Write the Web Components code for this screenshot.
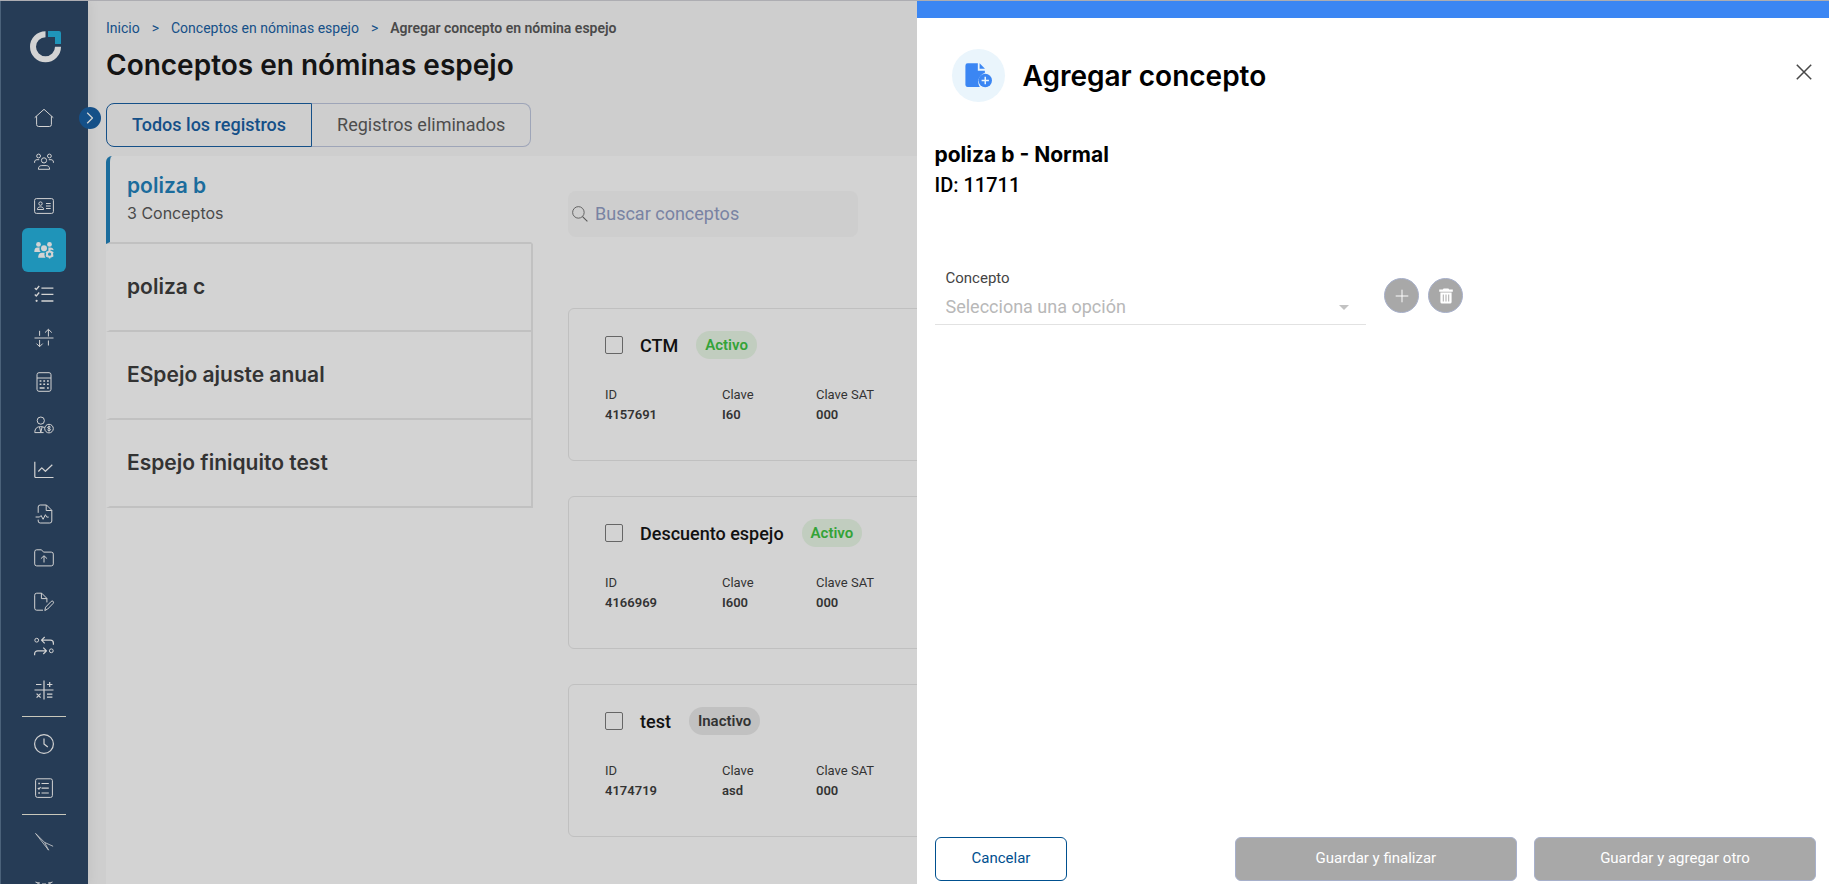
<!DOCTYPE html>
<html lang="es">
<head>
  <meta charset="UTF-8">
  <meta name="viewport" content="width=device-width, initial-scale=1.0">
  <title>Conceptos en nóminas espejo</title>
  <style>
    :root {
      --font-body: Roboto, "Liberation Sans", sans-serif;
      --font-title: Inter, "Open Sans", sans-serif;
      --nav: #263c56;
      --brand: #155088;
      --accent: #1f94b9;
      --text: #333;
      --line: #c1c1c1;
      --page: #cecece;
      --panel: #d3d3d3;
    }
    body {
      margin: 0;
      font-family: var(--font-body);
      color: var(--text);
    }
  </style>
</head>
<body>
  <app-shell>
    <side-nav slot="nav"></side-nav>
    <page-header slot="main" heading="Conceptos en nóminas espejo"></page-header>
    <tab-switch slot="main"></tab-switch>
    <payroll-panel slot="main">
      <payroll-item slot="list" name="poliza b" detail="3 Conceptos" active></payroll-item>
      <payroll-item slot="list" name="poliza c"></payroll-item>
      <payroll-item slot="list" name="ESpejo ajuste anual"></payroll-item>
      <payroll-item slot="list" name="Espejo finiquito test"></payroll-item>
      <search-box></search-box>
      <concept-card name="CTM" status="Activo" concept-id="4157691" clave="I60" sat="000"></concept-card>
      <concept-card name="Descuento espejo" status="Activo" concept-id="4166969" clave="I600" sat="000"></concept-card>
      <concept-card name="test" status="Inactivo" concept-id="4174719" clave="asd" sat="000"></concept-card>
    </payroll-panel>
    <side-drawer slot="drawer" heading="Agregar concepto">
      <concept-form name="poliza b - Normal" number="11711"></concept-form>
    </side-drawer>
  </app-shell>

  <script>
    const ICONS = {
      home: '<path d="M.7 9.7 10 1.3l9.3 8.4M2.6 8.2v8.3a2 2 0 0 0 2 2h10.8a2 2 0 0 0 2-2V8.2"/>',
      users: '<circle cx="4.6" cy="4" r="1.9"/><circle cx="15.4" cy="4" r="1.9"/><circle cx="10" cy="8.4" r="2.6"/><path d="M.6 10.8V10c0-1.500 1-2.300 2.400-2.300h2.200M19.400 10.800V10c0-1.500-1-2.300-2.400-2.300h-2.200M4.400 17.300c0-2.600 1.200-3.700 3.400-3.700h4.400c2.200 0 3.400 1.100 3.400 3.700z"/>',
      idcard: '<rect x=".6" y="2.600" width="18.800" height="14.800" rx="1.800"/><circle cx="6.500" cy="7.600" r="1.700"/><path d="M3.400 13.500c0-1.700 1-2.600 3.100-2.600s3.100.9 3.100 2.600zM12 7.500h4.700M12 10h4.700M12 12.500h4.700"/>',
      usersCog: '<g fill="currentColor" stroke="none"><circle cx="4.500" cy="4.400" r="2.400"/><circle cx="15.500" cy="4.400" r="2.400"/><circle cx="10" cy="8.200" r="3"/><path d="M.3 12c0-3 1-4.400 3.200-4.400h2.300c-.6 1.700-.2 3.200.9 4.400zM14.200 7.600h2.300c1.700 0 2.800.8 3.200 2.600-1.700-.9-3.800-.7-5.500.5.200-1 .3-2 0-3.100zM4.200 17.800c0-3.300 1.200-5 3.600-5h2.900c-.5 1.700-.3 3.500.8 5z"/></g><circle cx="15.600" cy="14.200" r="2.600" stroke-width="2"/><path stroke-width="1.500" d="M15.600 10v1.500M15.600 17v1.500M11.900 12.100l1.400.8M17.900 15.500l1.400.8M11.900 16.300l1.400-.8M17.900 12.900l1.400-.8"/>',
      checks: '<path stroke-width="1.300" d="m.8 4 1.500 1.500L5.200 2M.8 10.500 2.300 12l2.900-3.500M7.400 4.200h12M7.400 10.400h12M7.400 17h12"/><circle cx="2.600" cy="16.800" r="1.100" fill="currentColor" stroke="none"/>',
      exchange: '<path d="M.5 10h19M5.600 2.800v5M5.600 12v6.600M2.500 15.600l3.100 3.100 3.100-3.100M14.400 12.500v5M14.400 8.500V1.500M11 4.600l3.400-3.300 3.400 3.300"/>',
      calculator: '<rect x="3" y=".7" width="14" height="18.600" rx="2"/><path d="M3 6h14"/><path stroke-width="1.600" stroke-dasharray="1.800 1.900" d="M5.600 9h9.400M5.600 12.300h9.400"/><path stroke-width="1.400" d="M5.600 16h5M13 16h1.800"/>',
      userMoney: '<circle cx="6.800" cy="4.600" r="3.600"/><path d="M.8 16.600c0-4 2-6 6-6 1.600 0 2.900.4 3.900 1.200M.8 16.600h8.800M5.500 11l1.300 5.300L8.100 11"/><circle cx="15" cy="12.600" r="4.300"/><path d="M16.600 11.200c-.6-.8-3-.8-3 .3 0 1.300 3 .7 3 2.100 0 1.200-2.500 1.200-3.200.2M15 9.600v6"/>',
      chart: '<path d="M.8 1.700v14.800a1 1 0 0 0 1 1h17.700M4.300 11.500l3.500-3.600 3.600 3.400 6.900-6.500" stroke-width="1.200"/>',
      fileWave: '<path d="M4.200 8.800V3a2 2 0 0 1 2-2h6.300l5.300 5.300V17a2 2 0 0 1-2 2H6.200a2 2 0 0 1-2-2v-1.400M12.200 1v5.500h5.600M1.600 13h4l1.500-1.500 2 3.800 2.300-4.600 1.300 2.400h2"/>',
      folder: '<path d="M.7 15.900V3.800a2 2 0 0 1 2-2h4.500l2.600 2.300h7.500a2 2 0 0 1 2 2v9.800a2 2 0 0 1-2 2H2.700a2 2 0 0 1-2-2zM10 14.500V8M6.900 10.700 10 7.700l3.100 3"/>',
      fileEdit: '<path d="M9 18.200H2.700a2 2 0 0 1-2-2V3.200a2 2 0 0 1 2-2h5l5.200 5.200v4M7.400 1.200v5.400h5.500M10.800 18.500l.8-3.300 5.600-5.800c1.300-1.200 3.200.5 2 1.900L13.700 17z"/>',
      flow: '<circle cx="2.700" cy="4.200" r="1.900"/><circle cx="17.300" cy="14.800" r="1.900"/><path stroke-width="1.200" d="M10.700 1 7.500 4.200l3.200 3.200M7.700 4.200h8.700a3 3 0 0 1 3 3v1.500M9.300 11.600l3.200 3.200L9.300 18M12.300 14.800H3.600a3 3 0 0 0-3 3v1.500"/>',
      operations: '<path stroke-width="1.200" d="M10 .5v19M.5 10h19M2 4.500h5.400M13 4.500h5.400M15.700 1.900v5.200M2.600 13.700l4 4M6.600 13.700l-4 4M13 14.200h5.400M13 17.200h5.400"/>',
      clock: '<circle cx="10" cy="10" r="9.400" stroke-width="1.200"/><path d="M10 4.500V10l3.800 3" stroke-width="1.200"/>',
      taskList: '<rect x="1.600" y=".8" width="16.800" height="18.600" rx="1.800"/><path stroke-width="1.200" d="M7.500 5.500h7.300M7.500 10.200h7.300M7.500 15h7.300M3.900 10l1 1.200 1.700-2.200"/><path stroke-width="1.600" d="M4.300 5.500h1.600M4.300 15h1.600"/>',
      tool: '<path d="m1.400 1.200 13.200 17M2 1.800l8.600 8.600 8.500 3.900M10.600 10.400l4 7.800" stroke-width=".8"/>',
      settings: '<path d="m1.500 6 4 1.500M5.500 6l-3 3M8 8h4M14.500 7.500l4-1.500M14.500 6l3 3"/>',
      chevron: '<path d="m6 2.500 7.500 7.500L6 17.500" stroke-width="1.800"/>',
      search: '<circle cx="8" cy="8" r="7.200" stroke-width="1.100"/><path d="m13.200 13.200 6 6" stroke-width="1.300"/>',
      close: '<path d="m2 2 16 16M18 2 2 18" stroke-width="1.700"/>',
      plus: '<path d="M10 1v18M1 10h18" stroke-width="1.400"/>',
      trash: '<path fill="currentColor" stroke="none" fill-rule="evenodd" d="M7 .5h6l1 1.500h4.500v2.600h-17V2H6zM3 5.600h14V17.500a2 2 0 0 1-2 2H5a2 2 0 0 1-2-2zM6 8v9h1.200V8zm3.400 0v9h1.200V8zM12.800 8v9H14V8z"/>',
      fileAdd: '<g fill="currentColor" stroke="none"><path d="M2 1h7.500v5.400h5.200v1.800A6.800 6.800 0 0 0 11 18.600H2A1.700 1.700 0 0 1 .3 17V2.700A1.700 1.700 0 0 1 2 1zM10.800 1l4 4h-4z"/><circle cx="15" cy="13.700" r="5"/></g><path d="M15 11v5.400M12.300 13.700h5.400" stroke="#eaf5fc" stroke-width="1.100"/>'
    };

    class AppIcon extends HTMLElement {
      connectedCallback() {
        if (this.shadowRoot) return;
        this.attachShadow({ mode: 'open' }).innerHTML = `
          <style>
            :host { display: inline-flex; width: 20px; height: 20px; }
            svg { width: 100%; height: 100%; overflow: visible; fill: none; stroke: currentColor; stroke-linejoin: round; }
          </style>
          <svg viewBox="0 0 20 20" aria-hidden="true">${ICONS[this.getAttribute('name')] || ''}</svg>
        `;
      }
    }

    class AppShell extends HTMLElement {
      constructor() {
        super();
        this.attachShadow({ mode: 'open' }).innerHTML = `
          <style>
            :host {
              display: grid;
              grid-template-columns: auto 1fr;
              position: relative;
              box-sizing: border-box;
              height: 100vh;
              overflow: hidden;
              border-top: 1px solid #adadb2;
              background: var(--page);
            }
            main {
              display: flex;
              flex-direction: column;
              min-width: 0;
              min-height: 0;
              padding: 16px 15px 0 18px;
            }
          </style>
          <slot name="nav"></slot>
          <main><slot name="main"></slot></main>
          <slot name="drawer"></slot>
        `;
      }
    }

    class SideNav extends HTMLElement {
      constructor() {
        super();
        const link = ([icon, label]) => `
          <a href="#" aria-label="${label}" class="${icon === 'usersCog' ? 'active' : ''}"><app-icon name="${icon}"></app-icon></a>`;
        const main = [
          ['home', 'Inicio'], ['users', 'Colaboradores'], ['idcard', 'Credenciales'], ['usersCog', 'Nóminas'],
          ['checks', 'Tareas'], ['exchange', 'Movimientos'], ['calculator', 'Cálculo'], ['userMoney', 'Sueldos'],
          ['chart', 'Reportes'], ['fileWave', 'Actividad'], ['folder', 'Archivos'], ['fileEdit', 'Documentos'],
          ['flow', 'Procesos'], ['operations', 'Operaciones']
        ];
        const extra = [['clock', 'Historial'], ['taskList', 'Pendientes']];
        const last = [['tool', 'Herramientas'], ['settings', 'Ajustes']];

        this.attachShadow({ mode: 'open' }).innerHTML = `
          <style>
            :host {
              display: block;
              position: relative;
              box-sizing: border-box;
              width: 88px;
              min-height: 0;
              background: var(--nav);
              box-shadow: inset 1px 0 #4b627a, 0 0 12px rgba(0, 0, 0, .08);
            }
            nav {
              display: flex;
              flex-direction: column;
              align-items: center;
              height: 100%;
              overflow: hidden;
            }
            .logo { flex: none; width: 32px; height: 32px; margin: 30px 0 33px 4px; }
            a {
              flex: none;
              display: grid;
              place-items: center;
              width: 44px;
              height: 44px;
              border-radius: 6px;
              color: #d3d3d3;
            }
            a.active { background: var(--accent); }
            hr { flex: none; width: 44px; height: 1px; margin: 4px 0 5px; border: 0; background: #c9c8bb; }
            button {
              position: absolute;
              top: 106px;
              right: -13px;
              display: grid;
              place-items: center;
              width: 22px;
              height: 22px;
              padding: 0;
              border: 0;
              border-radius: 50%;
              background: var(--brand);
              color: #d3d3d3;
            }
            button app-icon { width: 14px; height: 14px; }
          </style>
          <nav>
            <svg class="logo" viewBox="0 0 32 32" aria-hidden="true">
              <path d="M15.500 3.200A12.500 12.500 0 1 0 28 15.700" fill="none" stroke="#d3d3d3" stroke-width="6"/>
              <path d="M18 0h11a2 2 0 0 1 2 2v11h-6V6h-7z" fill="#1f94b9"/>
            </svg>
            ${main.map(link).join('')}
            <hr>
            ${extra.map(link).join('')}
            <hr>
            ${last.map(link).join('')}
          </nav>
          <button type="button" aria-label="Expandir menú"><app-icon name="chevron"></app-icon></button>
        `;
      }
    }

    class PageHeader extends HTMLElement {
      constructor() {
        super();
        this.attachShadow({ mode: 'open' }).innerHTML = `
          <style>
            :host { display: block; }
            ol {
              display: flex;
              gap: 12px;
              margin: 0;
              padding: 0;
              list-style: none;
              font-size: 14px;
              line-height: 22px;
              color: var(--brand);
            }
            a { color: inherit; text-decoration: none; }
            .current { color: #4a4a4a; font-weight: 600; }
            h1 {
              margin: 8px 0 0;
              font-family: var(--font-title);
              font-size: 28px;
              font-weight: 600;
              line-height: 36px;
              color: #141414;
            }
          </style>
          <ol>
            <li><a href="#">Inicio</a></li>
            <li>&gt;</li>
            <li><a href="#">Conceptos en nóminas espejo</a></li>
            <li>&gt;</li>
            <li class="current">Agregar concepto en nómina espejo</li>
          </ol>
          <h1>${this.getAttribute('heading')}</h1>
        `;
      }
    }

    class TabSwitch extends HTMLElement {
      constructor() {
        super();
        this.attachShadow({ mode: 'open' }).innerHTML = `
          <style>
            :host { display: flex; margin: 20px 0 9px; }
            button {
              height: 44px;
              padding: 0 25px;
              border: 1px solid #9ea5b8;
              border-left: 0;
              border-radius: 0 8px 8px 0;
              background: none;
              font: 400 18px/24px var(--font-body);
              color: #4d4d4d;
            }
            button.active {
              border: 1px solid var(--brand);
              border-radius: 8px 0 0 8px;
              font-weight: 500;
              color: var(--brand);
            }
          </style>
          <button type="button" class="active">Todos los registros</button>
          <button type="button">Registros eliminados</button>
        `;
      }
    }

    class PayrollPanel extends HTMLElement {
      constructor() {
        super();
        this.attachShadow({ mode: 'open' }).innerHTML = `
          <style>
            :host {
              flex: 1;
              display: grid;
              grid-template-columns: 1fr 3fr;
              min-height: 0;
              border-top-left-radius: 8px;
              background: var(--panel);
            }
            .content {
              display: flex;
              flex-direction: column;
              gap: 35px;
              min-width: 0;
              padding: 35px 0 0 35px;
            }
          </style>
          <section><slot name="list"></slot></section>
          <section class="content"><slot></slot></section>
        `;
      }
    }

    class PayrollItem extends HTMLElement {
      constructor() {
        super();
        const detail = this.getAttribute('detail');
        this.attachShadow({ mode: 'open' }).innerHTML = `
          <style>
            :host { display: block; }
            button {
              display: flex;
              flex-direction: column;
              justify-content: center;
              gap: 2px;
              width: 100%;
              height: 88px;
              padding: 0 17px;
              border: solid var(--line);
              border-width: 0 2px 2px 4px;
              border-left-color: var(--panel);
              background: none;
              text-align: left;
              font-family: var(--font-title);
              color: var(--text);
            }
            strong { font-size: 21px; font-weight: 600; line-height: 26px; }
            small { font-size: 16px; line-height: 24px; color: #4a4a4a; }
            :host([active]) button {
              border-left-color: #1b6c9c;
              border-right-color: transparent;
              border-top-left-radius: 6px;
            }
            :host([active]) strong { color: #1b6c9c; }
          </style>
          <button type="button">
            <strong>${this.getAttribute('name')}</strong>
            ${detail ? `<small>${detail}</small>` : ''}
          </button>
        `;
      }
    }

    class SearchBox extends HTMLElement {
      constructor() {
        super();
        this.attachShadow({ mode: 'open' }).innerHTML = `
          <style>
            :host { display: block; margin-bottom: 36px; }
            label {
              display: flex;
              align-items: center;
              gap: 7px;
              box-sizing: border-box;
              width: 290px;
              height: 46px;
              padding: 0 4px;
              border-radius: 8px;
              background: var(--page);
              color: #555;
            }
            app-icon { flex: none; width: 16px; height: 16px; }
            input {
              flex: 1;
              min-width: 0;
              padding: 0;
              border: 0;
              outline: 0;
              background: none;
              font: 400 18px/24px var(--font-body);
            }
            input::placeholder { color: #7983a3; opacity: 1; }
          </style>
          <label>
            <app-icon name="search"></app-icon>
            <input type="text" placeholder="Buscar conceptos" aria-label="Buscar conceptos">
          </label>
        `;
      }
    }

    class ConceptCard extends HTMLElement {
      constructor() {
        super();
        const status = this.getAttribute('status');
        this.attachShadow({ mode: 'open' }).innerHTML = `
          <style>
            :host {
              display: block;
              box-sizing: border-box;
              height: 153px;
              padding: 22px 36px;
              border: 1px solid #c0c0c0;
              border-radius: 6px;
            }
            .head { display: flex; align-items: center; gap: 18px; height: 28px; }
            label { display: flex; align-items: center; gap: 17px; font-size: 18px; font-weight: 500; color: #111; }
            input {
              appearance: none;
              width: 18px;
              height: 18px;
              margin: 0;
              border: 1px solid #666;
              border-radius: 2px;
            }
            .badge {
              padding: 0 9px;
              border-radius: 14px;
              background: #c1c1c1;
              font-size: 15px;
              font-weight: 600;
              line-height: 28px;
            }
            .badge.activo { background: #c1cdbf; color: #34a338; }
            dl {
              display: grid;
              grid-template-columns: 117px 94px 94px;
              margin: 26px 0 0;
              font-size: 13px;
              line-height: 20px;
            }
            dd { margin: 0; font-weight: 600; }
          </style>
          <div class="head">
            <label><input type="checkbox">${this.getAttribute('name')}</label>
            <span class="badge ${status.toLowerCase()}">${status}</span>
          </div>
          <dl>
            <div><dt>ID</dt><dd>${this.getAttribute('concept-id')}</dd></div>
            <div><dt>Clave</dt><dd>${this.getAttribute('clave')}</dd></div>
            <div><dt>Clave SAT</dt><dd>${this.getAttribute('sat')}</dd></div>
          </dl>
        `;
      }
    }

    class SideDrawer extends HTMLElement {
      constructor() {
        super();
        this.attachShadow({ mode: 'open' }).innerHTML = `
          <style>
            /* the drawer lies over the page */
            :host {
              position: absolute;
              top: 0;
              right: 0;
              bottom: 0;
              display: flex;
              flex-direction: column;
              box-sizing: border-box;
              width: calc(50% - 2px);
              border-top: 17px solid #3b86f3;
              background: #fff;
            }
            header { display: flex; align-items: center; gap: 18px; padding: 31px 16px 0 35px; }
            .mark {
              display: grid;
              place-items: center;
              width: 53px;
              height: 53px;
              border-radius: 50%;
              background: #eaf5fc;
              color: #3b86f3;
            }
            .mark app-icon { width: 27px; height: 27px; }
            h2 {
              flex: 1;
              margin: 0;
              font-family: var(--font-title);
              font-size: 28px;
              font-weight: 600;
              line-height: 36px;
              color: #000;
            }
            button { font: 400 15px/24px var(--font-body); }
            .close {
              display: grid;
              align-self: flex-start;
              margin-top: 14px;
              padding: 0;
              border: 0;
              background: none;
              color: #484848;
            }
            .close app-icon { width: 18px; height: 18px; }
            .body { flex: 1; min-height: 0; padding: 38px 13px 0 18px; }
            footer { display: flex; gap: 17px; padding: 0 13px 3px 18px; }
            footer button {
              box-sizing: border-box;
              width: 32%;
              height: 44px;
              padding: 0 0 2px;
              border: 1px solid #a7b0cb;
              border-radius: 6px;
              background: #a8a8a8;
              color: #fff;
            }
            footer .cancel {
              width: auto;
              margin-right: auto;
              padding: 0 36px 2px;
              border-color: #00508f;
              background: #fff;
              color: #00508f;
            }
          </style>
          <header>
            <span class="mark"><app-icon name="fileAdd"></app-icon></span>
            <h2>${this.getAttribute('heading')}</h2>
            <button type="button" class="close" aria-label="Cerrar"><app-icon name="close"></app-icon></button>
          </header>
          <div class="body"><slot></slot></div>
          <footer>
            <button type="button" class="cancel">Cancelar</button>
            <button type="button" disabled>Guardar y finalizar</button>
            <button type="button" disabled>Guardar y agregar otro</button>
          </footer>
        `;
      }

      connectedCallback() {
        this.shadowRoot.querySelector('.close').addEventListener('click', () => this.remove());
        this.shadowRoot.querySelector('.cancel').addEventListener('click', () => this.remove());
      }
    }

    class ConceptForm extends HTMLElement {
      constructor() {
        super();
        this.attachShadow({ mode: 'open' }).innerHTML = `
          <style>
            :host { display: block; color: #000; }
            h3 { margin: 0; font: 700 21px/30px var(--font-title); }
            p { margin: 0; font-size: 20px; font-weight: 500; line-height: 30px; }
            .row { display: flex; align-items: center; gap: 9px; margin-top: 66px; }
            .field {
              display: flex;
              flex-direction: column;
              position: relative;
              box-sizing: border-box;
              width: 49%;
              margin-right: 9px;
              padding: 0 11px;
              border-bottom: 1px solid #e2e2e2;
            }
            .field::after {
              content: "";
              position: absolute;
              right: 17px;
              bottom: 14px;
              border: 5px solid transparent;
              border-top-color: #c2c2c2;
              border-bottom: 0;
            }
            label { font-size: 15px; line-height: 24px; color: #444; }
            select {
              appearance: none;
              height: 34px;
              padding: 0;
              border: 0;
              outline: 0;
              background: none;
              font: 400 18px/24px var(--font-body);
              color: #b8b8b8;
            }
            button {
              display: grid;
              place-items: center;
              width: 35px;
              height: 35px;
              padding: 0;
              border: 1px solid #a7b0cb;
              border-radius: 50%;
              background: #a8a8a8;
              color: #fff;
            }
            button app-icon { width: 14px; height: 14px; }
            button .big { width: 16px; height: 16px; }
          </style>
          <h3>${this.getAttribute('name')}</h3>
          <p>ID: ${this.getAttribute('number')}</p>
          <div class="row">
            <div class="field">
              <label for="concepto">Concepto</label>
              <select id="concepto"><option>Selecciona una opción</option></select>
            </div>
            <button type="button" disabled aria-label="Agregar"><app-icon name="plus"></app-icon></button>
            <button type="button" disabled aria-label="Eliminar"><app-icon class="big" name="trash"></app-icon></button>
          </div>
        `;
      }
    }

    customElements.define('app-icon', AppIcon);
    customElements.define('app-shell', AppShell);
    customElements.define('side-nav', SideNav);
    customElements.define('page-header', PageHeader);
    customElements.define('tab-switch', TabSwitch);
    customElements.define('payroll-panel', PayrollPanel);
    customElements.define('payroll-item', PayrollItem);
    customElements.define('search-box', SearchBox);
    customElements.define('concept-card', ConceptCard);
    customElements.define('side-drawer', SideDrawer);
    customElements.define('concept-form', ConceptForm);
  </script>
</body>
</html>
